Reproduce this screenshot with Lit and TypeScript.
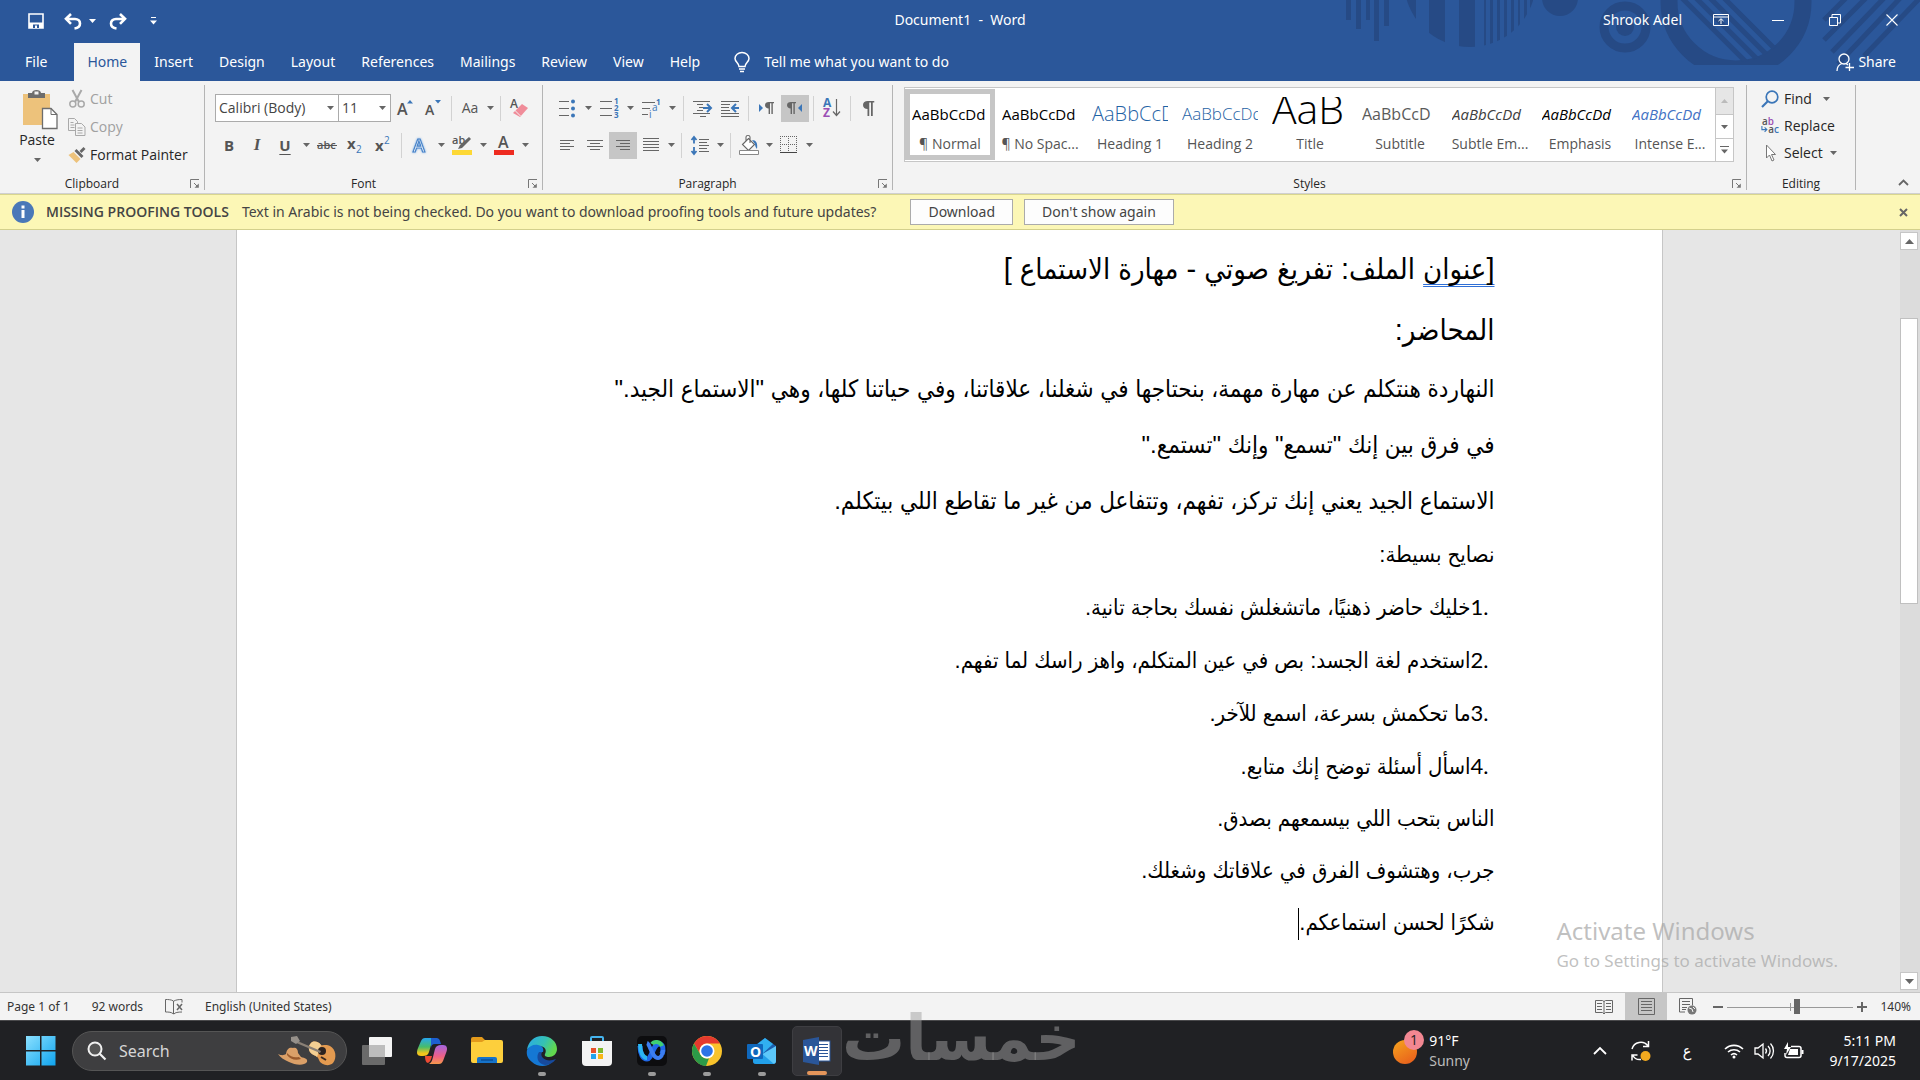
import { LitElement, html, css, svg, nothing, TemplateResult } from "lit";
import { customElement } from "lit/decorators.js";
import { classMap } from "lit/directives/class-map.js";

const ico = (w: number, h: number, body: TemplateResult, cls = "") =>
  html`<svg class="ico ${cls}" width=${w} height=${h} viewBox="0 0 ${w} ${h}" aria-hidden="true">${body}</svg>`;

const caret = html`<svg class="caret" width="7" height="4" viewBox="0 0 7 4" aria-hidden="true"><path d="M0 0h7L3.5 4z" fill="#666" /></svg>`;

/* Horizontal rules given as [x1, x2, y] */
const rules = (rows: number[][], color = "#666") =>
  rows.map(([a, b, y]) => svg`<path d="M${a} ${y + 0.5}H${b}" stroke=${color} />`);

const pilcrow = (x: number, y: number) => svg`<path transform="translate(${x} ${y})" d="M9 0v1.2H7.8V12H6.4V1.2H5V12H3.6V6.4C1.6 6.4 0 5.2 0 3.2S1.6 0 3.8 0z" fill="#666"/>`;

const icons: Record<string, TemplateResult> = {
  save: ico(16, 16, svg`<path d="M1 1h14v14H1z" fill="none" stroke="#fff" stroke-width="1.600"/><path d="M1 9.500h14V15H1z" fill="#fff"/><path d="M5 11.500h6V15H5z" fill="#2b579a"/><path d="M7 12.500h2V15H7z" fill="#fff"/>`),
  undo: ico(18, 17, svg`<path d="M7 1L2 5.800l5 5M2.500 6H11c3 0 5 2 5 4.500S14 15 10.500 15.500" fill="none" stroke="#fff" stroke-width="2.600"/>`),
  redo: ico(18, 17, svg`<path d="M11 1l5 4.800-5 5M15.500 6H7C4 6 2 8 2 10.500S4 15 7.500 15.500" fill="none" stroke="#fff" stroke-width="2.600"/>`),
  custom: ico(7, 8, svg`<path d="M1 .5h5" stroke="#fff"/><path d="M0 3.500h7L3.500 7.500z" fill="#fff"/>`),
  bulb: ico(16, 21, svg`<path d="M5 14.500C5 11 1 10 1 6.500a7 6 0 0 1 14 0C15 10 11 11 11 14.500zM5 17h6M6 19.500h4" fill="none" stroke="#fff" stroke-width="1.500"/>`),
  share: ico(18, 19, svg`<circle cx="8" cy="6" r="5" fill="none" stroke="#fff" stroke-width="1.300"/><path d="M1 18c0-4 2-6.500 5-7.500M10 10.500l2 1.500M13.500 10v8M9.500 14.500h8.500" fill="none" stroke="#fff" stroke-width="1.300"/>`),
  ribbonOpt: ico(16, 12, svg`<path d="M.5.5h15v11H.5zM.5 3h15M8 10V5M5.500 7L8 4.700 10.500 7" fill="none" stroke="#fff"/>`),
  min: ico(12, 12, svg`<path d="M0 6.500h12" stroke="#fff"/>`),
  restore: ico(12, 12, svg`<path d="M.5 3.500h8v8h-8zM3 3V.5h8.500V9H9" fill="none" stroke="#fff"/>`),
  close: ico(12, 12, svg`<path d="M.5.5l11 11M11.500.5l-11 11" stroke="#fff" stroke-width="1.100"/>`),
  paste: ico(36, 40, svg`<rect x="1" y="5" width="27" height="31" fill="#edc27b"/><path d="M6 9V4h4c0-4 9-4 9 0h4v5z" fill="#6d6d6d"/><rect x="12.500" y="2.500" width="4" height="3" fill="#f3f3f3"/><path d="M20.500 19.500h8.500l6 6v14h-14.500z" fill="#fff" stroke="#6d6d6d" stroke-width="1.300"/><path d="M29 19.500v6h6" fill="none" stroke="#6d6d6d"/>`),
  cut: ico(16, 18, svg`<path d="M3.500 0l6.500 12M12.500 0L6 12" stroke="#a9a9a9" stroke-width="2"/><circle cx="3.800" cy="14" r="3" fill="none" stroke="#a9a9a9" stroke-width="1.500"/><circle cx="12.200" cy="14" r="3" fill="none" stroke="#a9a9a9" stroke-width="1.500"/>`),
  copy: ico(18, 18, svg`<path d="M.5.5h6l3 3v9h-9zM2.500 4.500h3M2.500 7h4M2.500 9.500h4" fill="#f3f3f3" stroke="#a9a9a9"/><path d="M7.500 5.500h6l3.500 3.500v8.500H7.500zM9.500 10h5M9.500 12.500h5M9.500 15h5" fill="#f3f3f3" stroke="#a9a9a9"/>`),
  painter: ico(17, 16, svg`<path d="M0 8l5-3 7 7-4 4z" fill="#edc27b"/><path d="M6 4l2-2 7 7-2 2zM11 4l4-4 2 2-4 4z" fill="#666"/>`),
  grow: ico(16, 18, svg`<text x="0" y="16" class="glyph g15n">A</text><path d="M10 4.500h6L13 1z" fill="#3b76b8"/>`),
  shrink: ico(16, 18, svg`<text x="0" y="16" class="glyph g14">A</text><path d="M10 1h6l-3 3.500z" fill="#3b76b8"/>`),
  eraser: ico(20, 20, svg`<text x="1" y="10" class="glyph g12">A</text><path d="M4 15l9-9 6 4-8 9z" fill="#f08c99"/><path d="M5.500 12l6 6" stroke="#f3f3f3"/>`),
  strike: ico(20, 14, svg`<text x="0" y="11" class="glyph g11">abc</text><path d="M0 7.500h20" stroke="#555"/>`),
  sub: ico(16, 18, svg`<text x="0" y="13" class="glyph g15">x</text><text x="9" y="17" class="blue g9">2</text>`),
  sup: ico(16, 18, svg`<text x="0" y="15" class="glyph g15">x</text><text x="9" y="8" class="blue g9">2</text>`),
  effects: ico(18, 18, svg`<text x="2" y="16" class="fx">A</text>`),
  highlight: ico(20, 20, svg`<text x="0" y="9" class="glyph g11">ab</text><path d="M17 2l2 2-9 9-4 1 2-4z" fill="#666"/><path d="M0 15h20v5H0z" fill="#fdd835"/>`),
  fontColor: ico(20, 20, svg`<text x="4" y="13" class="glyph g16">A</text><path d="M0 15h20v5H0z" fill="#ee2b20"/>`),
  bullets: ico(16, 19, svg`${rules([[0, 10, 2], [0, 10, 9], [0, 10, 16]])}${[2.5, 9.5, 16.5].map(y => svg`<circle cx="14" cy=${y} r="2" fill="#3b76b8"/>`)}`),
  numbering: ico(18, 19, svg`${rules([[0, 12, 2], [0, 12, 9], [0, 12, 16]])}${["1", "2", "3"].map((t, i) => svg`<text x="14" y=${5 + i * 7} class="blue g7">${t}</text>`)}`),
  multi: ico(18, 19, svg`${rules([[0, 13, 3], [0, 8, 9], [0, 6, 15]])}<text x="14" y="6" class="blue g7">1</text><text x="10" y="12" class="blue g9">a</text><text x="7" y="19" class="blue g9">i</text>`),
  dec: ico(19, 17, svg`${rules([[0, 17, 1], [4, 10, 4], [6, 10, 7], [4, 10, 10], [0, 17, 13], [7, 13, 16]])}<path d="M10 8h7M14 4l4 4-4 4" fill="none" stroke="#3b76b8" stroke-width="2"/>`),
  inc: ico(19, 17, svg`${rules([[0, 18, 1], [0, 9, 4], [0, 8, 7], [0, 9, 10], [0, 18, 13], [0, 18, 16]])}<path d="M18 8h-6M15 4l-4 4 4 4" fill="none" stroke="#3b76b8" stroke-width="2"/>`),
  ltr: ico(16, 12, svg`<path d="M0 2v8l4-4z" fill="#3b76b8"/>${pilcrow(6, 0)}`),
  rtl: ico(16, 12, svg`${pilcrow(0, 0)}<path d="M15 2v8l-4-4z" fill="#3b76b8"/>`),
  sort: ico(18, 20, svg`<text x="0" y="9" class="blue b11">A</text><text x="0" y="19" class="purple b11">Z</text><path d="M13.500 1v16M10 13.500l3.500 4 3.500-4" fill="none" stroke="#666" stroke-width="1.200"/>`),
  pil: ico(12, 15, svg`<g transform="scale(1.250)">${pilcrow(0, 0)}</g>`),
  left: ico(16, 12, svg`${rules([[1, 15, 1], [1, 11, 4], [1, 15, 7], [1, 11, 10]])}`),
  center: ico(16, 12, svg`${rules([[0, 16, 1], [3, 13, 4], [0, 16, 7], [3, 13, 10]])}`),
  right: ico(16, 12, svg`${rules([[1, 15, 1], [5, 15, 4], [1, 15, 7], [5, 15, 10]])}`),
  justify: ico(16, 14, svg`${rules([[0, 16, 0], [0, 16, 3], [0, 16, 6], [0, 16, 9], [0, 16, 12]])}`),
  spacing: ico(18, 19, svg`${rules([[8, 18, 3], [8, 16, 6], [8, 18, 9], [8, 16, 12], [8, 18, 15]])}<path d="M3 1.500v6M3 11v6.500M.5 4L3 1l2.500 3M.5 15L3 18l2.500-3" fill="none" stroke="#3b76b8" stroke-width="1.800"/>`),
  shading: ico(20, 20, svg`<path d="M3.500 9.500l6-6 6 6-6 6zM7 6V2c0-2 4-2 4 0v6" fill="#fff" stroke="#666" stroke-width="1.100"/><path d="M13 5c4 0 6 3 5 9-1-1-2-3-2-5z" fill="#3b76b8"/><path d="M.5 15.500h19v4H.5z" fill="#fff" stroke="#888"/>`),
  borders: ico(18, 18, svg`<path d="M.5 0v17M8.500 0v17M16.500 0v17M0 .5h17M0 8.500h17" stroke="#666" stroke-dasharray="1 1"/><path d="M0 16.500h17" stroke="#444"/>`),
  find: ico(18, 18, svg`<circle cx="11" cy="7" r="5.800" fill="none" stroke="#3b76b8" stroke-width="1.700"/><path d="M7 11l-6 6" stroke="#3b76b8" stroke-width="2.200"/>`),
  replace: ico(20, 20, svg`<text x="1" y="9" class="glyph n11">a<tspan class="purple">b</tspan></text><text x="8" y="18" class="glyph n11">a<tspan class="blue">c</tspan></text><path d="M1 10v4h5M4 11.500L6.500 14 4 16.500" fill="none" stroke="#3b76b8" stroke-width="1.200"/>`),
  select: ico(18, 18, svg`<path d="M5.500 1v13l3-3 2.500 6 2-1-2.500-5.500h4z" fill="#fff" stroke="#777"/>`),
  launcher: ico(9, 9, svg`<path d="M.5 9V.5H9M4 4l4 4" fill="none" stroke="#777"/><path d="M8.800 4.500v4.300H4.500z" fill="#777"/>`),
  chevron: ico(11, 7, svg`<path d="M1 6l4.500-4.500L10 6" fill="none" stroke="#666" stroke-width="1.800"/>`),
  info: ico(22, 22, svg`<circle cx="11" cy="11" r="11" fill="#4a78b8"/><path d="M9.500 9h3v8h-3zM9.500 4.500h3v3h-3z" fill="#fff"/>`),
  closeDark: ico(9, 9, svg`<path d="M1 1l7 7M8 1L1 8" stroke="#666" stroke-width="2"/>`),
  proof: ico(18, 16, svg`<path d="M8.500 15V2C6 .5 3 .5.500.5V13c3 0 6 0 8 2M9 2c1.500-1 4-1.500 8-1.500v3M9 15c1-1.500 4-2 8-2" fill="none" stroke="#666"/><path d="M12 5l5 6M17 5l-5 6" stroke="#666" stroke-width="1.500"/>`),
  read: ico(18, 16, svg`<path d="M.5 1.500h7l1.500 1 1.500-1h7v12h-7L9 15l-1.500-1.500h-7zM9 2v13" fill="none" stroke="#666"/>${rules([[2, 7, 4], [2, 7, 7], [2, 7, 10], [11, 16, 4], [11, 16, 7], [11, 16, 10]])}`),
  print: ico(17, 17, svg`<path d="M.5.5h16v16H.5z" fill="none" stroke="#666"/>${rules([[3, 14, 3], [3, 14, 6], [3, 14, 9], [3, 14, 12]])}`),
  web: ico(18, 17, svg`<path d="M.5.5h13v7M6 14H.5V.5" fill="none" stroke="#666"/>${rules([[3, 11, 3], [3, 11, 6], [3, 8, 9], [3, 7, 11]])}<circle cx="13" cy="12" r="4.500" fill="#777"/><path d="M10 10l3 1 1 3M14 9l2 2" stroke="#f3f3f3" fill="none"/>`),
  deco: html`<svg class="deco" width="580" height="65" viewBox="0 0 580 65" aria-hidden="true">
    <defs>
      <clipPath id="half"><circle cx="130" cy="-19" r="66" /></clipPath>
      <clipPath id="inner"><circle cx="396" cy="2" r="60" /></clipPath>
    </defs>
    <g fill="#264a85">
      <path d="M6 0h5v20H6zM16 0h5v29h-5zM26 0h4v20h-4zM34 0h5v41h-5zM44 0h5v26h-5z" />
      <path clip-path="url(#half)" d="M60 0h16v60H60zM89 0h16v60H89zM119 0h16v60h-16zM144 0h2v60h-2zM150 0h3v60h-3zM157 0h3v60h-3zM164 0h3v60h-3zM171 0h3v60h-3zM178 0h2v60h-2zM184 0h3v60h-3zM190 0h3v60h-3z" />
      <circle cx="220" cy="-2" r="18" /><circle cx="285" cy="27" r="9" />
    </g>
    <g fill="none" stroke="#264a85">
      <circle cx="285" cy="27" r="21" stroke-width="9" />
      <circle cx="396" cy="2" r="67" stroke-width="17" />
      <g clip-path="url(#inner)" stroke-width="5"><path d="M334-10l80 80M346-12l80 80M358-14l80 80M370-16l80 80" /></g>
      <g stroke-width="5"><path d="M510-6l-26 26M530-6l-46 46M548-6l-56 58M564-6l-66 70M580-2l-56 58" /></g>
    </g>
  </svg>`,
};

const tb: Record<string, TemplateResult> = {
  start: ico(30, 30, svg`<defs><linearGradient id="wg" x1="0" y1="0" x2="1" y2="1"><stop offset="0" stop-color="#8be0ff"/><stop offset="1" stop-color="#0fa4ee"/></linearGradient></defs><path d="M0 0h14v14H0zM15.500 0h14v14h-14zM0 15.500h14v14H0zM15.500 15.500h14v14h-14z" fill="url(#wg)"/>`),
  guitar: ico(60, 30, svg`<path d="M0 18c4 2 6 1 8 0 1-6 4-7 7-6 3-1 5 1 5 5l3 4c4 1 7 2 6 5-3 4-12 3-18 0C6 24 2 21 0 18z" fill="#dba068"/><path d="M9 17c4 4 7 5 12 4l2 2c-6 2-11 0-14-4z" fill="#9a5a2c"/><path d="M33 7c3-3 8-1 10 2 2 1 5-1 9 1 6 3 7 12 3 17-4 4-12 2-14-3-1-4-4-4-7-6-4-3-4-8-1-11z" fill="#e39a50"/><path d="M33 7c3-3 8-1 10 2l-4 12c-2-2-4-2-5-3-4-3-4-8-1-11z" fill="#f3cf93"/><circle cx="44" cy="15" r="4" fill="#2c2320"/><path d="M17 4l26 11-1 2L16 6z" fill="#8a8076"/><path d="M13 1l6-1 3 5-4 3-5-3z" fill="#96908a"/><path d="M43 21l5 3" stroke="#3a2b22" stroke-width="2"/>`),
  taskview: ico(30, 28, svg`<rect x="0" y="8" width="23" height="20" rx="1" fill="#6a6a6a"/><rect x="7" y="0" width="23" height="20" rx="1" fill="#f4f4f4"/><rect x="7" y="8" width="16" height="12" fill="#bdbdbd"/>`),
  copilot: ico(30, 28, svg`<defs><linearGradient id="ca" x1="0" y1="0" x2="0" y2="1"><stop offset="0" stop-color="#27a7f0"/><stop offset=".5" stop-color="#47bd69"/><stop offset=".85" stop-color="#f3c51c"/></linearGradient><linearGradient id="cb" x1="0" y1="0" x2="0" y2="1"><stop offset="0" stop-color="#a365e0"/><stop offset=".6" stop-color="#ee6086"/><stop offset="1" stop-color="#f5984b"/></linearGradient></defs><path d="M8 1h10c-2 1-3 3-4 7l-2 7c-1 3-3 4-6 4H4c-4 0-5-3-3-8L4 4c1-2 2-3 4-3z" fill="url(#ca)"/><path d="M14 1h6c2 0 3 2 4 6h-6c-3 0-4 2-4 4z" fill="#1c5fd0"/><path d="M22 27H12c2-1 3-3 4-7l2-8c1-3 3-4 6-4h2c4 0 5 3 3 8l-3 8c-1 2-2 3-4 3z" fill="url(#cb)"/><path d="M8 19h7c-1 4-2 6-4 7-2 0-3-3-3-7z" fill="#ee4a33"/>`),
  explorer: ico(32, 28, svg`<path d="M0 2q0-2 2-2h9l3 3h16v8H0z" fill="#e39a1b"/><path d="M0 6q0-1 1-1h10l3-2h16q2 0 2 2v19q0 2-2 2H2q-2 0-2-2z" fill="#fdcf3c"/><path d="M6 26v-4q0-2 2-2h16q2 0 2 2v4z" fill="#1673ca"/><path d="M10 23h12" stroke="#0b4f97" stroke-width="1.500"/>`),
  edge: ico(32, 30, svg`<defs><linearGradient id="ea" x1="0" y1="0" x2="1" y2=".4"><stop offset="0" stop-color="#2aa9ec"/><stop offset=".6" stop-color="#35c1b3"/><stop offset="1" stop-color="#62d84e"/></linearGradient></defs><path d="M1 14C2 6 8 0 16 0c9 0 15 6 15 13 0 5-4 8-8 8-3 0-5-1-4-3 2-4 0-8-6-8-5 0-10 1-12 4z" fill="url(#ea)"/><path d="M1 14c2-4 7-6 11-5 5 1 6 4 5 7-2 0-4 2-3 6 1 5 6 7 11 5-4 4-14 4-19-1-4-3-6-7-5-12z" fill="#1578d4"/><path d="M13 16c-3 4-2 12 6 13 4 0 8-2 11-6-5 2-10 2-13-1-2-2-2-4-1-6z" fill="#174a9c"/>`),
  store: ico(30, 30, svg`<path d="M9 7V2q0-1 1-1h10q1 0 1 1v5" fill="none" stroke="#45b4ee" stroke-width="2"/><path d="M0 5h30v21q0 4-4 4H4q-4 0-4-4z" fill="#f3f3f3"/><path d="M9 12h5v5H9z" fill="#e8512b"/><path d="M16 12h5v5h-5z" fill="#7fb92d"/><path d="M9 18h5v5H9z" fill="#22a3ec"/><path d="M16 18h5v5h-5z" fill="#f7b617"/>`),
  webex: ico(30, 30, svg`<rect width="30" height="30" rx="5" fill="#0d0d0f"/><path d="M3 10c0 8 3 13 7 13 5 0 6-15 12-15 4 0 5 5 3 10" fill="none" stroke="#2068e8" stroke-width="5"/><path d="M3 8c0 8 3 14 7 14" fill="none" stroke="#2bb6f2" stroke-width="4"/><path d="M15 8c2-3 8-3 10 2" fill="none" stroke="#3fcf73" stroke-width="4"/><path d="M10 7c3 1 5 15 11 15 3 0 5-4 5-8" fill="none" stroke="#3b7df0" stroke-width="4"/>`),
  chrome: ico(30, 30, svg`<circle cx="15" cy="15" r="15" fill="#f9c32b"/><path d="M15 0a15 15 0 0 1 13 7.500H15A7.500 7.500 0 0 0 8.500 18.800L2 7.500A15 15 0 0 1 15 0z" fill="#e53a2e"/><path d="M2 7.500L8.500 18.800A7.500 7.500 0 0 0 17 22.200L14 30A15 15 0 0 1 2 7.500z" fill="#2c9a48"/><circle cx="15" cy="15" r="7.500" fill="#fff"/><circle cx="15" cy="15" r="5.800" fill="#2c74e6"/>`),
  outlook: ico(30, 28, svg`<path d="M6 10L18 1l11 8v15q0 3-3 3H9q-3 0-3-3z" fill="#1b5fae"/><path d="M8 9l10-8 8 6-13 12z" fill="#31b0f0"/><path d="M12 19L29 9v15q0 3-3 3H12z" fill="#5cc8fa"/><path d="M6 22l8-6 13 11H9q-3 0-3-3z" fill="#22a0ea"/><rect y="7" width="16" height="15" rx="1" fill="#0f68bd"/><text x="3" y="20" class="olk">O</text>`),
  word: ico(28, 28, svg`<rect x="13" y="4" width="14" height="20" fill="#fff" stroke="#2a5699"/>${rules([[16, 25, 7], [16, 25, 10], [16, 25, 13], [16, 25, 16], [16, 25, 19]], "#2a5699")}<path d="M0 3l16-3v28L0 25z" fill="#2a5699"/><text x="1" y="19" class="wrd">W</text>`),
  weather: ico(34, 36, svg`<defs><linearGradient id="sun" x1="0" y1="0" x2=".6" y2="1"><stop offset="0" stop-color="#f6a51e"/><stop offset="1" stop-color="#e9641c"/></linearGradient></defs><circle cx="12" cy="22" r="12" fill="url(#sun)"/><circle cx="21" cy="10" r="10" fill="#f28792"/><text x="17" y="15" class="bdg">1</text>`),
  up: ico(14, 9, svg`<path d="M1 8l6-6 6 6" fill="none" stroke="#fff" stroke-width="1.800"/>`),
  sync: ico(22, 22, svg`<path d="M2 9A9 9 0 0 1 18 6M18.500 1v5.500H13M11 19.500C7 20 4 18 2.500 15M2 20.500V15h5.500" fill="none" stroke="#fff" stroke-width="1.500"/><circle cx="15.500" cy="16" r="5" fill="#f2a91f"/>`),
  wifi: ico(20, 16, svg`<path d="M1 6a13 13 0 0 1 18 0M4 9a9 9 0 0 1 12 0M7 12a4.500 4.500 0 0 1 6 0" fill="none" stroke="#fff" stroke-width="1.600"/><circle cx="10" cy="14" r="1.500" fill="#fff"/>`),
  sound: ico(20, 18, svg`<path d="M1 6h3l5-4v14l-5-4H1z" fill="none" stroke="#fff" stroke-width="1.300"/><path d="M11.500 6.500a4 4 0 0 1 0 5M14 4a7 7 0 0 1 0 10M16.500 1.500a11 11 0 0 1 0 15" fill="none" stroke="#fff" stroke-width="1.300"/>`),
  battery: ico(20, 18, svg`<path d="M7 4.500h8q2 0 2 2v7q0 2-2 2H3q-2 0-2-2V11" fill="none" stroke="#fff" stroke-width="1.500"/><path d="M17.500 8h2v4h-2z" fill="#fff"/><path d="M6 7h8v6H4z" fill="#fff"/><path d="M4 0L0 7h3l-1 6 5-8H4z" fill="#fff"/>`),
  lens: ico(20, 20, svg`<circle cx="8" cy="8" r="6.500" fill="#555" stroke="#f0f0f0" stroke-width="2"/><path d="M12.500 12.500l6 6" stroke="#f0f0f0" stroke-width="2.200"/>`),
};

type Tool = { id: string; label: string; split?: boolean; on?: boolean };
const SEP = null;

const base = css`
  :host { display: block; }
  button, input, select { font: inherit; color: inherit; border: 0; padding: 0; margin: 0; background: none; border-radius: 0; }
  svg { display: block; flex: none; }
  .ico { overflow: visible; }
  text { font-family: "Open Sans", sans-serif; }
`;

@customElement("word-titlebar")
class WordTitlebar extends LitElement {
  static styles = [base, css`
    :host { background: #2b579a; color: #fff; position: relative; font-size: 14px; }
    .deco { position: absolute; right: 0; top: 0; }
    .top { display: grid; grid-template-columns: 1fr auto 1fr; align-items: center; height: 40px; position: relative; }
    .quick { display: flex; align-items: center; padding: 2px 0 0 28px; }
    .quick button:nth-child(1) { margin-right: 20px; }
    .quick button:nth-child(2) { display: flex; align-items: center; gap: 7px; margin-right: 13px; }
    .quick button:nth-child(3) { margin-right: 23px; }
    .caret path { fill: #fff; }
    .win { display: flex; align-items: center; justify-content: flex-end; }
    .win span { margin-right: 10px; }
    .win button { width: 57px; height: 38px; display: grid; place-items: center; }
    .tabs { display: flex; align-items: center; height: 38px; margin-top: 3px; position: relative; }
    .tabs a { color: #fff; text-decoration: none; padding: 0 13px; height: 38px; line-height: 37px; }
    .tabs a.file { padding: 0 27px 0 25px; }
    .tabs a.on { background: #f3f3f3; color: #2b579a; margin-right: 1px; }
    .tell { display: flex; align-items: center; gap: 14px; margin: 0 0 0 21px; flex: 1; }
    .tell input { width: 240px; outline: none; }
    .tell input::placeholder { color: #fff; opacity: 1; }
    .share { display: flex; align-items: center; gap: 4px; margin-right: 24px; }
  `];
  tabs = ["Home", "Insert", "Design", "Layout", "References", "Mailings", "Review", "View", "Help"];
  render() {
    return html`
      ${icons.deco}
      <div class="top">
        <div class="quick">
          <button aria-label="Save">${icons.save}</button>
          <button aria-label="Undo">${icons.undo}${caret}</button>
          <button aria-label="Redo">${icons.redo}</button>
          <button aria-label="Customize toolbar">${icons.custom}</button>
        </div>
        <span>Document1&nbsp; -&nbsp; Word</span>
        <div class="win">
          <span>Shrook Adel</span>
          <button aria-label="Ribbon display options">${icons.ribbonOpt}</button>
          <button aria-label="Minimize">${icons.min}</button>
          <button aria-label="Restore">${icons.restore}</button>
          <button aria-label="Close">${icons.close}</button>
        </div>
      </div>
      <nav class="tabs">
        <a href="#file" class="file">File</a>
        ${this.tabs.map(t => html`<a href="#${t}" class=${classMap({ on: t === "Home" })}>${t}</a>`)}
        <label class="tell">${icons.bulb}<input aria-label="Tell me what you want to do" placeholder="Tell me what you want to do" /></label>
        <button class="share">${icons.share}Share</button>
      </nav>`;
  }
}

@customElement("word-ribbon")
class WordRibbon extends LitElement {
  static styles = [base, css`
    :host { display: flex; background: #f3f3f3; height: 113px; border-bottom: 1px solid #d0d0d0; color: #262626; font-family: "Open Sans", sans-serif; font-size: 14px; box-sizing: border-box; padding: 4px 0; }
    .group { display: flex; flex-direction: column; border-right: 1px solid #b4b4b4; box-sizing: border-box; height: 105px; }
    .body { flex: 1; }
    .foot { display: flex; align-items: center; height: 13px; font-size: 12px; }
    .foot span { flex: 1; text-align: center; }
    .foot button { width: 20px; padding-left: 6px; }
    .clip { width: 205px; } .font { width: 338px; } .para { width: 350px; } .styles { flex: 1; min-width: 0; } .edit { width: 109px; }
    .tail { flex: 1; max-width: 64px; display: flex; align-items: flex-end; justify-content: center; padding: 0 0 3px 30px; box-sizing: border-box; }
    .clip .body { display: flex; padding-left: 16px; }
    .paste { display: flex; flex-direction: column; align-items: center; width: 42px; padding-top: 4px; gap: 1px; }
    .paste .ico { margin-left: 6px; }
    .paste .caret { margin-top: 7px; }
    .col { display: flex; flex-direction: column; }
    .col button { display: flex; align-items: center; height: 28px; text-align: left; gap: 4px; white-space: nowrap; }
    .col .ico { width: 18px; }
    .clip .col { margin-left: 10px; }
    .clip .off { color: #a0a0a0; }
    .row { display: flex; align-items: center; height: 28px; }
    .rows { padding: 9px 0 0 10px; display: flex; flex-direction: column; gap: 9px; }
    .tool { width: 28px; height: 27px; display: flex; align-items: center; justify-content: center; }
    .split { width: 42px; display: grid; grid-template-columns: 28px 14px; justify-items: center; }
    .tight .split { width: 40px; grid-template-columns: 28px 12px; }
    .on { background: #c6c6c6; }
    .sep { width: 1px; height: 25px; background: #d2d2d2; margin: 0 4px; }
    .letter { font-size: 15px; font-weight: 700; color: #555; }
    .it { font-style: italic; font-family: "Liberation Serif", serif; font-size: 17px; }
    .un { text-decoration: underline; text-underline-offset: 3px; }
    .aa { font-size: 14px; color: #555; }
    .combo { position: relative; display: flex; align-items: center; height: 28px; box-sizing: border-box; border: 1px solid #ababab; background: #fff; color: #444; }
    .combo select { appearance: none; width: 100%; height: 26px; padding: 0 0 0 3px; outline: none; }
    .combo .caret { position: absolute; right: 4px; pointer-events: none; }
    .family { width: 124px; } .size { width: 53px; margin-left: -1px; }
    .gallery { display: flex; margin: 2px 12px 0 11px; height: 75px; border: 1px solid #c6c6c6; background: #fff; box-sizing: border-box; }
    .cards { flex: 1; display: flex; overflow: hidden; padding-top: 1px; }
    .card { width: 90px; flex: none; height: 71px; box-sizing: border-box; display: flex; flex-direction: column; align-items: center; border: 5px solid transparent; padding: 0; }
    .card.sel { border-color: #c6c6c6; }
    .prev { width: 76px; margin-top: 3px; height: 36px; line-height: 34px; overflow: hidden; text-align: left; white-space: nowrap; color: #000; font-size: 15px; }
    .name { color: #555; line-height: 22px; font-size: 14px; white-space: nowrap; }
    .h1 { font-size: 20px; font-weight: 300; color: #1f63a5; } .h2 { font-size: 17px; font-weight: 300; color: #1f63a5; }
    .title { font-size: 41px; font-weight: 300; line-height: 22px; } .subt { color: #5a5a5a; font-size: 16px; }
    .se { font-style: italic; color: #404040; } .em { font-style: italic; } .ie { font-style: italic; color: #4472c4; }
    .scroll { width: 17px; border-left: 1px solid #c6c6c6; display: grid; grid-template-rows: 26px 24px 1fr; }
    .scroll button { display: grid; place-items: center; }
    .scroll button + button { border-top: 1px solid #c6c6c6; }
    .scroll .dim { background: #e6e6e6; }
    .edit .col { padding-left: 14px; }
    .edit .col button { height: 27px; gap: 5px; }
    .edit .caret { margin-left: 2px; }
    .glyph { fill: #555; font-weight: 600; } .blue { fill: #3b76b8; } .purple { fill: #9b4fb5; }
    .g16 { font-size: 16px; } .g15 { font-size: 15px; font-weight: 700; } .g15n { font-size: 16px; } .g14 { font-size: 14px; } .g12 { font-size: 12px; } .g11 { font-size: 11px; } .g9 { font-size: 10px; } .g7 { font-size: 8px; font-weight: 700; }
    .b11 { font-size: 12px; font-weight: 700; } .n11 { font-size: 11px; }
    .fx { font-size: 18px; font-weight: 600; fill: #fff; stroke: #4a84c8; stroke-width: 1.200px; filter: drop-shadow(0 0 1px #7fb0e8); }
  `];
  tools(list: (Tool | null)[]) {
    return list.map(t => t === SEP ? html`<i class="sep"></i>` : html`
      <button class=${classMap({ tool: true, split: !!t.split, on: !!t.on })} aria-label=${t.label}>
        ${this.face(t.id)}${t.split ? caret : nothing}
      </button>`);
  }
  face(id: string) {
    if (id === "B") return html`<span class="letter">B</span>`;
    if (id === "I") return html`<span class="letter it">I</span>`;
    if (id === "U") return html`<span class="letter un">U</span>`;
    if (id === "Aa") return html`<span class="aa">Aa</span>`;
    return icons[id];
  }
  foot(label: string, launcher = true) {
    return html`<div class="foot"><span>${label}</span>${launcher ? html`<button aria-label="${label} settings">${icons.launcher}</button>` : nothing}</div>`;
  }
  cards = [
    ["AaBbCcDd", "¶ Normal", "sel"], ["AaBbCcDd", "¶ No Spac...", ""], ["AaBbCcDd", "Heading 1", "h1"],
    ["AaBbCcDd", "Heading 2", "h2"], ["AaB", "Title", "title"], ["AaBbCcD", "Subtitle", "subt"],
    ["AaBbCcDd", "Subtle Em...", "se"], ["AaBbCcDd", "Emphasis", "em"], ["AaBbCcDd", "Intense E...", "ie"],
  ];
  render() {
    return html`
      <section class="group clip">
        <div class="body">
          <button class="paste">${icons.paste}<span>Paste</span>${caret}</button>
          <div class="col">
            <button class="off">${icons.cut}Cut</button>
            <button class="off">${icons.copy}Copy</button>
            <button>${icons.painter}Format Painter</button>
          </div>
        </div>
        ${this.foot("Clipboard")}
      </section>
      <section class="group font">
        <div class="body rows">
          <div class="row tight">
            <div class="combo family"><select aria-label="Font"><option>Calibri (Body)</option></select>${caret}</div>
            <div class="combo size"><select aria-label="Font size"><option>11</option></select>${caret}</div>
            ${this.tools([{ id: "grow", label: "Increase font size" }, { id: "shrink", label: "Decrease font size" }, SEP,
              { id: "Aa", label: "Change case", split: true }, SEP, { id: "eraser", label: "Clear formatting" }])}
          </div>
          <div class="row">
            ${this.tools([{ id: "B", label: "Bold" }, { id: "I", label: "Italic" }, { id: "U", label: "Underline", split: true },
              { id: "strike", label: "Strikethrough" }, { id: "sub", label: "Subscript" }, { id: "sup", label: "Superscript" }, SEP,
              { id: "effects", label: "Text effects", split: true }, { id: "highlight", label: "Highlight", split: true }, { id: "fontColor", label: "Font color", split: true }])}
          </div>
        </div>
        ${this.foot("Font")}
      </section>
      <section class="group para">
        <div class="body rows">
          <div class="row">
            ${this.tools([{ id: "bullets", label: "Bullets", split: true }, { id: "numbering", label: "Numbering", split: true }, { id: "multi", label: "Multilevel list", split: true }, SEP,
              { id: "dec", label: "Decrease indent" }, { id: "inc", label: "Increase indent" }, SEP,
              { id: "ltr", label: "Left-to-right" }, { id: "rtl", label: "Right-to-left", on: true }, SEP,
              { id: "sort", label: "Sort" }, SEP, { id: "pil", label: "Show marks" }])}
          </div>
          <div class="row tight">
            ${this.tools([{ id: "left", label: "Align left" }, { id: "center", label: "Center" }, { id: "right", label: "Align right", on: true }, { id: "justify", label: "Justify", split: true }, SEP,
              { id: "spacing", label: "Line spacing", split: true }, SEP, { id: "shading", label: "Shading", split: true }, { id: "borders", label: "Borders", split: true }])}
          </div>
        </div>
        ${this.foot("Paragraph")}
      </section>
      <section class="group styles">
        <div class="body">
          <div class="gallery">
            <div class="cards">
              ${this.cards.map(([p, n, c]) => html`<button class="card ${c === "sel" ? "sel" : ""}"><span class="prev ${c}">${p}</span><span class="name">${n}</span></button>`)}
            </div>
            <div class="scroll">
              <button class="dim" aria-label="Previous styles"><svg width="7" height="4" viewBox="0 0 7 4"><path d="M0 4h7L3.500 0z" fill="#bbb" /></svg></button>
              <button aria-label="Next styles">${caret}</button>
              <button aria-label="More styles"><svg width="9" height="8" viewBox="0 0 9 8"><path d="M0 .5h9" stroke="#666" /><path d="M1 3.500h7L4.500 7.500z" fill="#666" /></svg></button>
            </div>
          </div>
        </div>
        ${this.foot("Styles")}
      </section>
      <section class="group edit">
        <div class="body col">
          <button>${icons.find}Find&nbsp;${caret}</button>
          <button>${icons.replace}Replace</button>
          <button>${icons.select}<span>Select</span>${caret}</button>
        </div>
        ${this.foot("Editing", false)}
      </section>
      <div class="tail"><button aria-label="Collapse ribbon">${icons.chevron}</button></div>`;
  }
}

@customElement("word-notice")
class WordNotice extends LitElement {
  static styles = [base, css`
    :host { display: flex; align-items: center; height: 36px; box-sizing: border-box; background: #fcf7b6; border-top: 1px solid #d9d68f; border-bottom: 1px solid #d3d08c; padding: 0 12px; font-size: 14px; color: #444; }
    strong { font-family: "Open Sans", sans-serif; font-weight: 600; margin: 0 13px 0 12px; }
    .act { height: 26px; border: 1px solid #ababab; background: #fdfdfd; padding: 0 17px; margin-right: 11px; }
    .msg { margin-right: 34px; }
    .x { margin-left: auto; }
  `];
  render() {
    return html`${icons.info}<strong>MISSING PROOFING TOOLS</strong>
      <span class="msg">Text in Arabic is not being checked. Do you want to download proofing tools and future updates?</span>
      <button class="act">Download</button><button class="act">Don't show again</button>
      <button class="x" aria-label="Dismiss">${icons.closeDark}</button>`;
  }
}

@customElement("word-document")
class WordDocument extends LitElement {
  static styles = [base, css`
    :host { display: flex; flex: 1; background: #e6e6e6; position: relative; min-height: 0; }
    .desk { flex: 1; display: flex; justify-content: center; padding-right: 2px; }
    .page { width: 76%; box-sizing: border-box; max-width: 1427px; background: #fff; border: solid #c6c6c6; border-width: 0 1px; padding: 9px 167px 20px; font-family: "Liberation Sans", "DejaVu Sans Condensed", "DejaVu Sans", sans-serif; color: #000; flex: none; }
    h1, h2, p { margin: 0; font-weight: 400; }
    h1, h2 { font-size: 29px; line-height: 61px; }
    .lead { font-size: 24px; line-height: 56px; }
    .text { font-size: 22px; line-height: 52px; }
    .num { font-family: "Lato", sans-serif; padding-right: 6px; }
    .grammar { text-decoration: underline double #2f6fd6 1px; text-underline-offset: 5px; text-decoration-skip-ink: none; }
    .cursor { display: inline-block; width: 1px; height: 32px; background: #000; vertical-align: middle; }
    .bar { width: 20px; background: #dcdcdc; display: flex; flex-direction: column; box-sizing: border-box; padding: 2px 2px 2px 0; }
    .bar button { height: 18px; background: #fff; border: 1px solid #c6c6c6; display: grid; place-items: center; box-sizing: border-box; }
    .lane { flex: 1; display: grid; grid-template-rows: 68px 286px 1fr; }
    .thumb { grid-row: 2; background: #fff; border: 1px solid #c0c0c0; }
    .activate { position: absolute; right: 82px; bottom: 17px; color: #a8a8a8b8; font: 400 17px/28px "Noto Sans", sans-serif; }
    .activate b { display: block; font-weight: 400; font-size: 24px; line-height: 32px; }
  `];
  tips = ["خليك حاضر ذهنيًا، ماتشغلش نفسك بحاجة تانية.", "استخدم لغة الجسد: بص في عين المتكلم، واهز راسك لما تفهم.", "ما تحكمش بسرعة، اسمع للآخر.", "اسأل أسئلة توضح إنك متابع."];
  render() {
    return html`
      <div class="desk">
        <article class="page" dir="rtl" lang="ar">
          <h1><span class="grammar">[عنوان</span> الملف: تفريغ صوتي - مهارة الاستماع ]</h1>
          <h2>المحاضر:</h2>
          <p class="lead">النهاردة هنتكلم عن مهارة مهمة، بنحتاجها في شغلنا، علاقاتنا، وفي حياتنا كلها، وهي "الاستماع الجيد."</p>
          <p class="lead">في فرق بين إنك "تسمع" وإنك "تستمع."</p>
          <p class="lead">الاستماع الجيد يعني إنك تركز، تفهم، وتتفاعل من غير ما تقاطع اللي بيتكلم.</p>
          <p class="text">نصايح بسيطة:</p>
          ${this.tips.map((t, i) => html`<p class="text"><span class="num">.${i + 1}</span>${t}</p>`)}
          <p class="text">الناس بتحب اللي بيسمعهم بصدق.</p>
          <p class="text">جرب، وهتشوف الفرق في علاقاتك وشغلك.</p>
          <p class="text">شكرًا لحسن استماعكم.<i class="cursor"></i></p>
        </article>
      </div>
      <div class="bar">
        <button aria-label="Scroll up"><svg width="9" height="5" viewBox="0 0 9 5"><path d="M0 5h9L4.500 0z" fill="#666" /></svg></button>
        <div class="lane"><div class="thumb"></div></div>
        <button aria-label="Scroll down"><svg width="9" height="5" viewBox="0 0 9 5"><path d="M0 0h9L4.500 5z" fill="#666" /></svg></button>
      </div>
      <div class="activate"><b>Activate Windows</b>Go to Settings to activate Windows.</div>`;
  }
}

@customElement("word-status")
class WordStatus extends LitElement {
  static styles = [base, css`
    :host { display: flex; align-items: center; justify-content: space-between; height: 28px; box-sizing: border-box; background: #f3f3f3; border-top: 1px solid #c6c6c6; font-size: 12px; color: #333; padding: 0 9px 0 7px; }
    div { display: flex; align-items: center; height: 27px; }
    .info { gap: 22px; }
    .views button { width: 42px; height: 27px; display: grid; place-items: center; }
    .views .on { background: #c6c6c6; }
    .views .zoom { gap: 4px; margin-left: 4px; }
    .views .zoom button { width: 10px; height: 16px; }
    .zoom output { margin-left: 9px; }
    input { appearance: none; width: 126px; height: 16px; background: linear-gradient(#999, #999) 0 8px / 100% 1px no-repeat, linear-gradient(#999, #999) 50% 50% / 1px 8px no-repeat; }
    input::-webkit-slider-thumb { appearance: none; width: 6px; height: 15px; background: #666; }
  `];
  render() {
    return html`
      <div class="info"><span>Page 1 of 1</span><span>92 words</span><button aria-label="Proofing">${icons.proof}</button><span>English (United States)</span></div>
      <div class="views">
        <button aria-label="Read mode">${icons.read}</button>
        <button class="on" aria-label="Print layout">${icons.print}</button>
        <button aria-label="Web layout">${icons.web}</button>
        <div class="zoom">
          <button aria-label="Zoom out"><svg width="10" height="10" viewBox="0 0 10 10"><path d="M0 5h10" stroke="#666" stroke-width="2" /></svg></button>
          <input type="range" aria-label="Zoom" min="10" max="190" value="110" />
          <button aria-label="Zoom in"><svg width="10" height="10" viewBox="0 0 10 10"><path d="M0 5h10M5 0v10" stroke="#666" stroke-width="2" /></svg></button>
          <output>140%</output>
        </div>
      </div>`;
  }
}

@customElement("win-taskbar")
class WinTaskbar extends LitElement {
  static styles = [base, css`
    :host { display: flex; align-items: center; justify-content: space-between; height: 60px; box-sizing: border-box; background: #202124; border-top: 1px solid #4a4a4c; color: #fff; font-size: 14px; position: relative; padding: 0 24px 0 16px; }
    .apps, .tray { display: flex; align-items: center; }
    .app { width: 50px; height: 50px; margin-left: 5px; border-radius: 5px; display: grid; place-items: center; position: relative; box-sizing: border-box; }
    .start { width: 50px; margin: 0 6px 0 0; }
    .app i { position: absolute; bottom: 0; left: 50%; width: 8px; height: 4px; margin-left: -4px; border-radius: 2px; background: #9b9b9b; }
    .active { background: #333337; border: 1px solid #3e3e42; }
    .active i { width: 20px; margin-left: -10px; background: #e4955a; bottom: 0; }
    .search { display: flex; align-items: center; width: 275px; height: 40px; box-sizing: border-box; border: 1px solid #555; border-radius: 20px; background: #3e3e40; padding: 0 8px 0 14px; }
    .search input { flex: 1; min-width: 0; margin-left: 12px; font-size: 16px; outline: none; }
    .search input::placeholder { color: #d6d6d6; opacity: 1; }
    .weather { display: flex; align-items: center; gap: 2px; margin-left: auto; text-align: left; line-height: 20px; }
    .weather .ico { margin-bottom: 6px; }
    .weather .dim { color: #bbb; }
    .tray { margin-left: 123px; }
    .tray button { display: grid; place-items: center; }
    .sync { margin-left: 23px; } .lang { width: 20px; margin-left: 25px; font: 16px "DejaVu Sans Condensed", "DejaVu Sans", sans-serif; } .net { margin-left: 27px; display: flex !important; gap: 10px; }
    .clock { margin-left: 22px; width: 70px; text-align: right; line-height: 20px; display: block; }
    .tray .clock { display: block; }
    .mark { position: absolute; left: 842px; bottom: 10px; font: 700 63px/63px "DejaVu Sans", sans-serif; color: #a0a0a080; pointer-events: none; }
    .olk { font-size: 14px; font-weight: 700; fill: #fff; } .wrd { font-size: 14px; font-weight: 700; fill: #fff; } .bdg { font-size: 14px; fill: #222; }
  `];
  apps: [string, string, boolean][] = [["taskview", "Task view", false], ["copilot", "Copilot", false], ["explorer", "File Explorer", false], ["edge", "Edge", true],
    ["store", "Store", false], ["webex", "Webex", true], ["chrome", "Chrome", true], ["outlook", "Outlook", true], ["word", "Word", true]];
  render() {
    return html`
      <div class="apps">
        <button class="app start" aria-label="Start">${tb.start}</button>
        <label class="search">${tb.lens}<input aria-label="Search" placeholder="Search" />${tb.guitar}</label>
        ${this.apps.map(([id, label, run]) => html`<button class=${classMap({ app: true, active: id === "word" })} aria-label=${label}>${tb[id]}${run ? html`<i></i>` : nothing}</button>`)}
      </div>
      <button class="weather">${tb.weather}<span>91°F<br /><span class="dim">Sunny</span></span></button>
      <div class="tray">
        <button aria-label="Hidden icons">${tb.up}</button>
        <button class="sync" aria-label="Updates">${tb.sync}</button>
        <button class="lang" lang="ar">ع</button>
        <button class="net" aria-label="Network, sound, battery">${tb.wifi}${tb.sound}${tb.battery}</button>
        <button class="clock">5:11 PM<br />9/17/2025</button>
      </div>
      <span class="mark" lang="ar" dir="rtl">خمسات</span>`;
  }
}

@customElement("app-root")
class AppRoot extends LitElement {
  static styles = css`
    :host { display: flex; flex-direction: column; min-height: 100vh; font-family: "Noto Sans", "Open Sans", sans-serif; line-height: 20px; }
  `;
  render() {
    return html`<word-titlebar></word-titlebar><word-ribbon></word-ribbon><word-notice></word-notice><word-document></word-document><word-status></word-status><win-taskbar></win-taskbar>`;
  }
}
